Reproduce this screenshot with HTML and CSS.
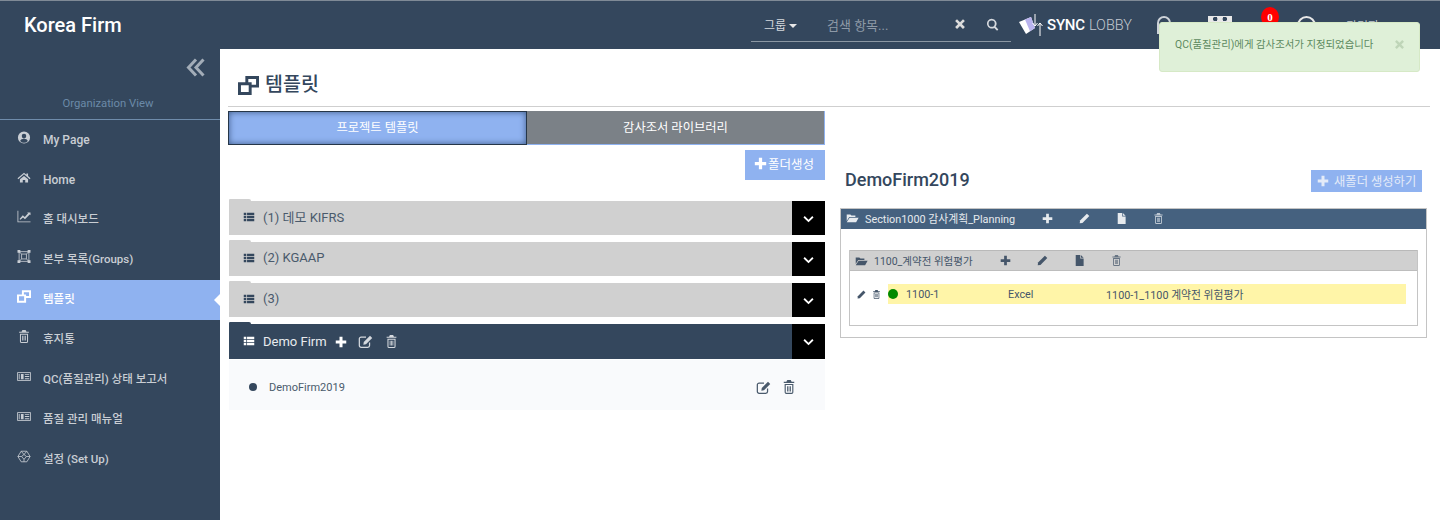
FILE: index.html
```html
<!DOCTYPE html>
<html lang="ko">
<head>
<meta charset="utf-8" />
<title>템플릿</title>
<link rel="stylesheet" href="styles.css">
</head>
<body>
<svg class="defs" width="0" height="0">
  <symbol id="i-plus" viewBox="0 0 16 16"><path d="M6 1h4v5h5v4h-5v5H6v-5H1V6h5z"/></symbol>
  <symbol id="i-times" viewBox="0 0 16 16"><path d="M4 1.500l4 4 4-4 2.500 2.500-4 4 4 4-2.500 2.500-4-4-4 4L1.500 12l4-4-4-4z"/></symbol>
  <symbol id="i-search" viewBox="0 0 16 16"><path fill-rule="evenodd" d="M7 1a6 6 0 0 1 4.800 9.600l3.400 3.400-1.600 1.600-3.400-3.400A6 6 0 1 1 7 1zm0 2.200a3.800 3.800 0 1 0 0 7.600 3.800 3.800 0 0 0 0-7.600z"/></symbol>
  <symbol id="i-list" viewBox="0 0 16 16"><path d="M1 2.200h3.400v3.200H1zM5.400 2.200H15v3.200H5.400zM1 6.400h3.400v3.200H1zM5.400 6.400H15v3.200H5.400zM1 10.600h3.400v3.200H1zM5.400 10.600H15v3.200H5.400z"/></symbol>
  <symbol id="i-chevron" viewBox="0 0 16 16"><path d="M2.500 4.500L8 9.800l5.500-5.300 1.800 1.900L8 13.500.7 6.400z"/></symbol>
  <symbol id="i-collapse" viewBox="0 0 19 19"><path fill="none" stroke="currentColor" stroke-width="3" d="M10 1.500L2.500 9.500l7.500 8M17.500 1.500L10 9.500l7.500 8"/></symbol>
  <symbol id="i-edit" viewBox="0 0 18 16"><path fill="none" stroke="currentColor" stroke-width="1.400" d="M13 9v3.500a2 2 0 0 1-2 2H3.500a2 2 0 0 1-2-2V5a2 2 0 0 1 2-2H9"/><path d="M6.500 8.500L13.500 1.500l2.500 2.500-7 7-3 .6z"/></symbol>
  <symbol id="i-trash" viewBox="0 0 16 16"><path fill-rule="evenodd" d="M6 0h4l1 2h3v1.500H2V2h3zM3 4.500h10V14a2 2 0 0 1-2 2H5a2 2 0 0 1-2-2zm1.300 1.200V14c0 .4.300.7.700.7h6c.4 0 .7-.3.700-.7V5.700zM5.800 7h1v6h-1zm1.700 0h1v6h-1zm1.700 0h1v6h-1z"/></symbol>
  <symbol id="i-file" viewBox="0 0 16 16"><path d="M2.500 0H9v5h5v11H2.500zM10 0l4 4h-4z"/></symbol>
  <symbol id="i-folder" viewBox="0 0 18 16"><path d="M1 3h5l1.500 1.500H13V6.500H4.500L1 12zM5 7.500h12.500L14 14H1z"/></symbol>
  <symbol id="i-pencil" viewBox="0 0 16 16"><path d="M11.500 1L15 4.500 5 14.500 1 15l.5-4z"/></symbol>
  <symbol id="i-user" viewBox="0 0 16 16"><path fill-rule="evenodd" d="M8 .5a7.500 7.500 0 1 1 0 15 7.500 7.500 0 0 1 0-15zm0 3a2.800 2.800 0 1 0 0 5.600 2.800 2.800 0 0 0 0-5.600zM3.300 12.300a6 6 0 0 0 9.400 0c-.6-1.800-2.400-2.800-4.700-2.800s-4.100 1-4.700 2.800z"/></symbol>
  <symbol id="i-home" viewBox="0 0 16 16"><path d="M8 2l3 2.600V3h2v3.300L16 9l-1 1-7-6-7 6-1-1zM3 10.300L8 6l5 4.300V14H9.500v-3h-3v3H3z"/></symbol>
  <symbol id="i-chart" viewBox="0 0 16 16"><path d="M0 1h1v13h15v1H0z"/><path d="M2.500 11l4-4.500 2.500 2 4-4.500-1.200-1H16v3.500l-1-1-5.800 6L6.800 9.300 3.500 12z"/></symbol>
  <symbol id="i-group" viewBox="0 0 16 16"><path fill="none" stroke="currentColor" d="M2 2h12v12H2zM5 5h6v6H5zM2 2l3 3M14 2l-3 3M2 14l3-3M14 14l-3-3"/><path d="M0 0h3.500v3.500H0zM12.500 0H16v3.500h-3.500zM0 12.500h3.500V16H0zM12.500 12.500H16V16h-3.500z"/></symbol>
  <symbol id="i-clone" viewBox="0 0 20 18"><path fill-rule="evenodd" d="M7 0h13v11h-7v7H0V6h7zm2.800 2.800V6H13v2.200h4.200V2.800zM2.800 8.800v6.400h7.400V8.800z"/></symbol>
  <symbol id="i-paper" viewBox="0 0 16 12"><path fill="none" stroke="currentColor" d="M.5 1.500h15v9H.5z"/><path d="M2 3h1v6H2zM4.500 3h3v6h-3zM9 3h5v1H9zM9 5.500h5v1H9zM9 8h5v1H9z"/></symbol>
  <symbol id="i-hex" viewBox="0 0 16 16"><path fill="none" stroke="currentColor" d="M4.500 1.500h7L15.500 8l-4 6.500h-7L.5 8zM4.500 1.500L8 5.500l3.500-4M.5 8H5l3 3.500L11 8h4.500M5 8l3-2.500L11 8M8 11.500v3"/></symbol>
  <symbol id="i-logo" viewBox="0 0 26 24"><path fill="#fff" d="M0 9l12-5 4 11-9 6z"/><path fill="#b9b3ee" d="M6 6.500L12 4l4 11-5 3.300z"/><path fill="none" stroke="#fff" d="M16 1v12M13.500 10l2.500 3 2.500-3M21 23V10M18.500 13l2.500-3 2.500 3"/></symbol>
</svg>

<header class="topbar">
  <div class="brand">Korea Firm</div>
  <div class="search">
    <span class="search-group">그룹 <i class="caret"></i></span>
    <span class="search-text">검색 항목...</span>
    <svg class="search-x"><use href="#i-times"/></svg>
    <svg class="ico-13 search-go"><use href="#i-search"/></svg>
  </div>
  <div class="logo">
    <svg class="logo-mark"><use href="#i-logo"/></svg>
    <span class="logo-sync">SYNC</span><span class="logo-lobby">LOBBY</span>
  </div>
  <div class="top-icons">
    <span class="top-bell"></span>
    <span class="top-box"></span>
    <span class="top-circle"></span>
    <span class="top-name">관리자</span>
  </div>
  <span class="badge">0</span>
  <div class="toast">
    <span>QC(품질관리)에게 감사조서가 지정되었습니다</span>
    <svg class="toast-x"><use href="#i-times"/></svg>
  </div>
</header>

<div class="layout">
  <aside class="sidebar">
    <div class="collapse"><svg class="collapse-ico"><use href="#i-collapse"/></svg></div>
    <div class="org">Organization View</div>
    <nav class="menu">
      <a class="menu-item"><svg class="menu-ico"><use href="#i-user"/></svg>My Page</a>
      <a class="menu-item"><svg class="menu-ico"><use href="#i-home"/></svg>Home</a>
      <a class="menu-item menu-ko"><svg class="menu-ico"><use href="#i-chart"/></svg>홈 대시보드</a>
      <a class="menu-item menu-ko"><svg class="menu-ico"><use href="#i-group"/></svg>본부 목록(Groups)</a>
      <a class="menu-item menu-ko active"><svg class="menu-ico"><use href="#i-clone"/></svg>템플릿</a>
      <a class="menu-item menu-ko"><svg class="menu-ico"><use href="#i-trash"/></svg>휴지통</a>
      <a class="menu-item menu-ko"><svg class="menu-ico"><use href="#i-paper"/></svg>QC(품질관리) 상태 보고서</a>
      <a class="menu-item menu-ko"><svg class="menu-ico"><use href="#i-paper"/></svg>품질 관리 매뉴얼</a>
      <a class="menu-item menu-ko"><svg class="menu-ico"><use href="#i-hex"/></svg>설정 (Set Up)</a>
    </nav>
  </aside>

  <main class="content">
    <div class="page-title">
      <svg class="title-ico"><use href="#i-clone"/></svg>
      <h1>템플릿</h1>
    </div>
    <div class="columns">
      <section class="left">
        <div class="tabs">
          <div class="tab tab-on">프로젝트 템플릿</div>
          <div class="tab tab-off">감사조서 라이브러리</div>
        </div>
        <div class="left-tools">
          <button class="btn-folder"><svg class="ico-13"><use href="#i-plus"/></svg>폴더생성</button>
        </div>
        <div class="acc">
          <span class="acc-label"><svg><use href="#i-list"/></svg>(1) 데모 KIFRS</span>
          <span class="acc-toggle"><svg><use href="#i-chevron"/></svg></span>
        </div>
        <div class="acc">
          <span class="acc-label"><svg><use href="#i-list"/></svg>(2) KGAAP</span>
          <span class="acc-toggle"><svg><use href="#i-chevron"/></svg></span>
        </div>
        <div class="acc">
          <span class="acc-label"><svg><use href="#i-list"/></svg>(3)</span>
          <span class="acc-toggle"><svg><use href="#i-chevron"/></svg></span>
        </div>
        <div class="acc acc-open">
          <span class="acc-label"><svg><use href="#i-list"/></svg>Demo Firm</span>
          <span class="acc-actions">
            <svg class="ico-12"><use href="#i-plus"/></svg>
            <svg class="ico-edit"><use href="#i-edit"/></svg>
            <svg class="ico-13"><use href="#i-trash"/></svg>
          </span>
          <span class="acc-toggle"><svg><use href="#i-chevron"/></svg></span>
        </div>
        <div class="acc-body">
          <i class="dot"></i>
          <span class="acc-item">DemoFirm2019</span>
          <svg class="ico-edit"><use href="#i-edit"/></svg>
          <svg class="ico-14"><use href="#i-trash"/></svg>
        </div>
      </section>

      <section class="right">
        <div class="right-head">
          <h2>DemoFirm2019</h2>
          <button class="btn-new"><svg class="ico-12"><use href="#i-plus"/></svg>새폴더 생성하기</button>
        </div>
        <div class="section-box">
          <div class="section-head">
            <span class="head-name"><svg class="ico-folder"><use href="#i-folder"/></svg>Section1000 감사계획_Planning</span>
            <span class="head-tools">
              <svg class="ico-11"><use href="#i-plus"/></svg>
              <svg class="ico-11"><use href="#i-pencil"/></svg>
              <svg class="ico-11"><use href="#i-file"/></svg>
              <svg class="ico-11 faded"><use href="#i-trash"/></svg>
            </span>
          </div>
          <div class="sub-box">
            <div class="sub-head">
              <span class="head-name"><svg class="ico-folder"><use href="#i-folder"/></svg>1100_계약전 위험평가</span>
              <span class="head-tools">
                <svg class="ico-11"><use href="#i-plus"/></svg>
                <svg class="ico-11"><use href="#i-pencil"/></svg>
                <svg class="ico-11"><use href="#i-file"/></svg>
                <svg class="ico-11 faded"><use href="#i-trash"/></svg>
              </span>
            </div>
            <div class="file-row">
              <span class="file-tools">
                <svg class="ico-9"><use href="#i-pencil"/></svg>
                <svg class="ico-9"><use href="#i-trash"/></svg>
              </span>
              <div class="file-line">
                <i class="status"></i>
                <span class="file-id">1100-1</span>
                <span class="file-type">Excel</span>
                <span>1100-1_1100 계약전 위험평가</span>
              </div>
            </div>
          </div>
        </div>
      </section>
    </div>
  </main>
</div>
</body>
</html>
```

FILE: styles.css
```css
* {
  box-sizing: border-box;
}

html,
body {
  margin: 0;
  padding: 0;
  height: 520px;
  overflow: hidden;
  background-color: #fff;
  font-family: Roboto, "Noto Sans CJK KR", sans-serif;
  color: #34475d;
}

.defs {
  display: block;
  height: 0;
}

svg {
  fill: currentColor;
  display: block;
  flex: none;
}

.ico-9 { width: 9px; height: 9px; }
.ico-11 { width: 11px; height: 11px; }
.ico-12 { width: 12px; height: 12px; }
.ico-13 { width: 13px; height: 13px; }
.ico-14 { width: 14px; height: 14px; }
.ico-edit { width: 16px; height: 15px; }
.ico-folder { width: 13px; height: 12px; }
.faded { opacity: 0.75; }

/* top bar */
.topbar {
  height: 49px;
  border-top: 1px solid #7f8a96;
  background-color: #34475d;
  display: flex;
  align-items: center;
  color: #fff;
  position: relative;
}

.brand {
  width: 751px;
  padding-left: 24px;
  font-size: 20px;
  font-weight: 500;
}

.search {
  width: 260px;
  height: 41px;
  padding-top: 6px;
  align-self: flex-start;
  display: flex;
  align-items: center;
  border-bottom: 1px solid #8b97a3;
  color: #d5d9de;
  font-size: 12px;
}

.search-group {
  width: 76px;
  padding-left: 13px;
  white-space: nowrap;
}

.caret {
  display: inline-block;
  border: 4px solid transparent;
  border-top: 4px solid #e8e8e8;
  border-bottom: 0;
  vertical-align: 2px;
}

.search-text {
  width: 127px;
  font-size: 13px;
  color: #8e9aa7;
}

.search-x {
  color: #dcdcdc;
  width: 12px;
  height: 12px;
}

.search-go {
  margin-left: 20px;
}

.logo {
  margin-left: 8px;
  width: 136px;
  display: flex;
  align-items: center;
  font-size: 15px;
}

.logo-mark {
  width: 26px;
  height: 24px;
  margin-right: 2px;
}

.logo-sync {
  font-weight: 500;
  letter-spacing: -0.2px;
}

.logo-lobby {
  margin-left: 4px;
  font-size: 14.500px;
  font-weight: 300;
  color: #c3c9d0;
}

.top-icons {
  display: flex;
  align-items: center;
}

.top-bell {
  width: 14px;
  height: 18px;
  margin-left: 2px;
  border: 2px solid #cdd2d8;
  border-radius: 7px 7px 0 0;
}

.top-box {
  width: 24px;
  height: 18px;
  margin-left: 37px;
  background: radial-gradient(circle at 30% 3px, #34475d 2px, transparent 2.500px),
    radial-gradient(circle at 70% 3px, #34475d 2px, transparent 2.500px),
    #e8e8e8;
}

.top-circle {
  width: 19px;
  height: 19px;
  margin-left: 65px;
  border: 2px solid #e8e8e8;
  border-radius: 50%;
}

.top-name {
  margin-left: 30px;
  font-size: 12px;
  color: #c3c9d0;
}

.badge {
  position: absolute;
  left: 1261px;
  top: 6px;
  width: 18px;
  height: 20px;
  border-radius: 50%;
  background-color: #f00;
  color: #fff;
  font-family: "Liberation Serif", serif;
  font-size: 11px;
  font-weight: 700;
  text-align: center;
  line-height: 20px;
}

.toast {
  position: absolute;
  left: 1159px;
  top: 21px;
  width: 261px;
  height: 50px;
  padding: 15px 14px 0 15px;
  display: flex;
  justify-content: space-between;
  background-color: #dff0d8;
  border: 1px solid #d6e9c6;
  border-radius: 3px;
  color: #5d8a60;
  font-size: 10.400px;
  line-height: 14px;
}

.toast-x {
  width: 11px;
  height: 11px;
  margin-top: 1px;
  color: #bfd5b8;
}

/* sidebar */
.layout {
  display: flex;
  height: 471px;
}

.sidebar {
  width: 220px;
  background-color: #34475d;
  flex: none;
}

.collapse {
  height: 47px;
  padding: 9px 15px 0 0;
  display: flex;
  justify-content: flex-end;
  color: #a3adb8;
}

.collapse-ico {
  width: 19px;
  height: 19px;
}

.org {
  height: 24px;
  padding-right: 4px;
  border-bottom: 1px solid #6f8cab;
  text-align: center;
  font-size: 11.300px;
  line-height: 16px;
  color: #6b8aa8;
}

.menu {
  display: flex;
  flex-direction: column;
}

.menu-item {
  height: 40px;
  padding: 0 0 1px 17px;
  display: flex;
  align-items: center;
  gap: 12px;
  color: #c9ced4;
  font-size: 12px;
  line-height: 16px;
  font-weight: 500;
  position: relative;
}

.menu-ko {
  padding-bottom: 3px;
  font-size: 11.500px;
}

.menu-ico {
  width: 14px;
  height: 13px;
  margin-top: -5px;
}

.active {
  background-color: #8fb2f0;
  color: #fff;
}

.active::after {
  content: "";
  position: absolute;
  right: 0;
  top: 14px;
  border: 6px solid transparent;
  border-right: 6px solid #fff;
  border-left: 0;
}

/* main */
.content {
  flex: 1;
  padding: 0 10px 0 8px;
}

.page-title {
  height: 58px;
  padding: 15px 0 0 10px;
  display: flex;
  align-items: center;
  gap: 6px;
  border-bottom: 1px solid #cfcfcf;
  color: #34475d;
}

.title-ico {
  width: 21px;
  height: 19px;
}

.page-title h1 {
  margin: 0;
  font-size: 19.500px;
  line-height: 24px;
  font-weight: 500;
}

.columns {
  display: flex;
}

.left {
  width: 597px;
  margin-top: 4px;
}

.tabs {
  display: flex;
  height: 34px;
}

.tab {
  flex: 1;
  padding-bottom: 2px;
  display: flex;
  align-items: center;
  justify-content: center;
  color: #fff;
  font-size: 12.300px;
}

.tab-on {
  background-color: #8fb2f0;
  border: 1px solid #263648;
  box-shadow: inset 0 0 6px #3f5c88;
}

.tab-off {
  background-color: #7b8187;
  border: 1px solid #8fb2f0;
  border-left: 0;
  border-top: 0;
}

.left-tools {
  display: flex;
  justify-content: flex-end;
  padding-top: 5px;
  height: 56px;
}

.btn-folder,
.btn-new {
  border: 0;
  display: flex;
  align-items: center;
  background-color: #8fb2f0;
  color: #fff;
  font-family: inherit;
}

.btn-folder {
  width: 80px;
  height: 30px;
  gap: 1px;
  padding: 0 0 3px 9px;
  font-size: 12.500px;
}

.acc {
  height: 34px;
  margin: 0 0 7px 1px;
  display: flex;
  align-items: center;
  background-color: #d0d0d0;
  color: #4a5a6c;
  font-size: 13px;
  position: relative;
}

.acc::before {
  content: "";
  position: absolute;
  left: 0;
  top: -2px;
  width: 22px;
  height: 2px;
  background-color: #d0d0d0;
  border-radius: 3px 6px 0 0;
}

.acc-label {
  flex: 1;
  display: flex;
  align-items: center;
  gap: 8px;
  padding: 0 0 3px 14px;
  white-space: nowrap;
}

.acc-label svg {
  color: #34475d;
  width: 12px;
  height: 12px;
}

.acc-toggle {
  width: 33px;
  height: 100%;
  background-color: #000;
  color: #fff;
  display: flex;
  align-items: center;
  justify-content: center;
}

.acc-toggle svg {
  width: 11px;
  height: 11px;
}

.acc-open {
  height: 35px;
  margin-bottom: 1px;
  background-color: #34475d;
  color: #e8ebee;
}

.acc-open::before {
  background-color: #34475d;
}

.acc-open .acc-label {
  flex: none;
  padding-bottom: 1px;
}

.acc-open .acc-label svg {
  color: #fff;
}

.acc-actions {
  flex: 1;
  display: flex;
  align-items: center;
  gap: 11px;
  padding: 0 0 0 8px;
}

.acc-actions svg:first-child {
  color: #fff;
}

.acc-actions svg + svg {
  color: #d5d9de;
}

.acc-body {
  height: 50px;
  margin-left: 1px;
  padding: 4px 29px 0 20px;
  display: flex;
  align-items: center;
  gap: 10px;
  background-color: #f9fafc;
  font-size: 11px;
  color: #4a5a6c;
}

.dot {
  width: 8px;
  height: 8px;
  margin-right: 2px;
  border-radius: 50%;
  background-color: #34475d;
}

.acc-item {
  flex: 1;
}

/* right panel */
.right {
  flex: 1;
  margin-left: 16px;
}

.right-head {
  height: 101px;
  margin-left: -5px;
  padding: 63px 8px 0 9px;
  display: flex;
  justify-content: space-between;
  align-items: flex-start;
}

.right-head h2 {
  margin: -1px 0 0 0;
  font-size: 18px;
  line-height: 22px;
  font-weight: 500;
  color: #34475d;
}

.btn-new {
  width: 111px;
  height: 22px;
  gap: 5px;
  padding: 0 0 0 6px;
  font-size: 12.300px;
  white-space: nowrap;
  color: #e4ebf8;
}

.section-box {
  height: 130px;
  margin: 0 3px 0 -1px;
  border: 1px solid #c4c4c4;
}

.section-head,
.sub-head {
  display: flex;
  align-items: center;
  padding-left: 5px;
}

.section-head {
  height: 20px;
  padding-bottom: 2px;
  background-color: #45617f;
  color: #e6eaee;
  font-size: 10.850px;
}

.head-name {
  display: flex;
  align-items: center;
  gap: 6px;
  white-space: nowrap;
}

.head-tools {
  display: flex;
  align-items: center;
  gap: 26px;
}

.section-head .head-name {
  width: 196px;
}

.sub-box {
  height: 76px;
  margin: 21px 8px 0 8px;
  border: 1px solid #c4c4c4;
  border-top: 0;
}

.sub-head {
  height: 21px;
  background-color: #d0d0d0;
  border-top: 1px solid #b9b9b9;
  border-bottom: 1px solid #bdbdbd;
  color: #45566a;
  font-size: 10.500px;
}

.sub-head .head-name {
  width: 145px;
}

.file-row {
  display: flex;
  align-items: center;
  margin-top: 13px;
  padding: 0 11px 0 7px;
  height: 20px;
  font-size: 10.800px;
  color: #45566a;
}

.file-tools {
  width: 31px;
  display: flex;
  gap: 6px;
  flex: none;
}

.file-line {
  flex: 1;
  height: 20px;
  display: flex;
  align-items: center;
  background-color: #fff5a8;
  white-space: nowrap;
}

.status {
  width: 10px;
  height: 10px;
  border-radius: 50%;
  background-color: #008a00;
  flex: none;
}

.file-id {
  width: 102px;
  margin-left: 8px;
}

.file-type {
  width: 98px;
}
```
